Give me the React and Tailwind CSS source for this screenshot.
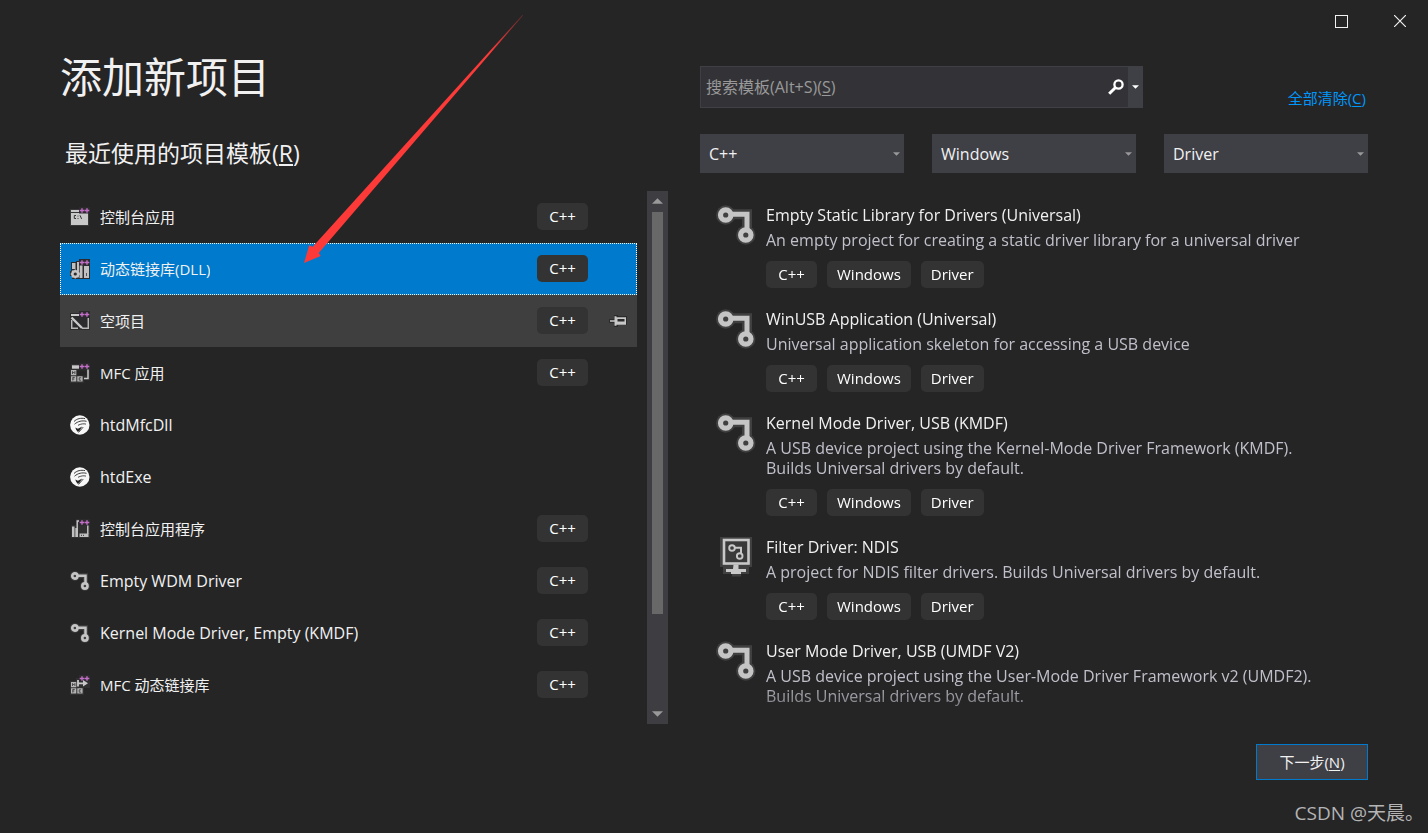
import React from "react";

function PlusPlus() {
  return (
    <>
      <rect x="9" y="0" width="11" height="6.5" fill="#2d2a2e" />
      <path d="M12 1.2v4.6M9.7 3.5h4.6M17 1.2v4.6M14.7 3.5h4.6" stroke="#c36fc9" strokeWidth="1.4" fill="none" />
    </>
  );
}

function Icon20({ children }) {
  return (
    <svg viewBox="0 0 20 20" className="size-5 shrink-0" aria-hidden="true">
      {children}
    </svg>
  );
}

function ConsoleIcon() {
  return (
    <Icon20>
      <path d="M0 2h10v3h9v14H0z" fill="#383838" />
      <path d="M1 3h8v2H1zM1 6h17v12H1z" fill="#c8c8c8" />
      <path d="M6 8.5H4.3v3H6M8 8.6v.9M8 11v.9M10 8.3l1.6 3.6" stroke="#333" strokeWidth="1" fill="none" />
      <PlusPlus />
    </Icon20>
  );
}

function DllIcon() {
  return (
    <Icon20>
      <path d="M1 3h5V2h8v2h6v16H2v-3H0v-5h1z" fill="#2d2d30" />
      <path d="M2 4h3.5v6H2zM7 3h5.5v16H9.5v-7H7zM14 7h5v12h-5z" fill="#c0c0c0" />
      <path d="M9.5 6v7M16.5 14v3" stroke="#55555a" strokeWidth="1" />
      <circle cx="5.3" cy="15" r="3" fill="none" stroke="#c8c8c8" strokeWidth="2.2" />
      <path d="M5.3 10.4v9.2M.7 15h9.2M2 11.7l6.6 6.6M8.6 11.7L2 18.3" stroke="#c8c8c8" strokeWidth="1.3" />
      <circle cx="5.3" cy="15" r="1.6" fill="#2d2d30" />
      <PlusPlus />
    </Icon20>
  );
}

function EmptyIcon() {
  return (
    <Icon20>
      <path d="M0 2h10v3h10v14H0z" fill="#2b2b2e" />
      <path d="M1 3h8v2H1z" fill="#c8c8c8" />
      <path d="M1.7 9v8.3H8M12 17.3h6.3V7" fill="none" stroke="#b8b8b8" strokeWidth="1.5" />
      <path d="M1.5 6.5L12 17" stroke="#c8c8c8" strokeWidth="2.4" />
      <PlusPlus />
    </Icon20>
  );
}

function LetterTiles() {
  return (
    <>
      <path d="M1 7h5.3v5.3H1zM1 13.3h5.3v5.3H1zM7.3 13.3h5.3v5.3H7.3z" fill="#b4b4b4" />
      <path d="M2.5 11V8.5l1.2 1.3 1.2-1.3V11M2.8 17.6v-3.2h2M2.8 16h1.6M11.2 14.8H9.2v2.4h2" stroke="#333" strokeWidth=".8" fill="none" />
    </>
  );
}

function MfcIcon() {
  return (
    <Icon20>
      <path d="M1 1h9v5h10v11h-6v3H0V6h1z" fill="#303030" />
      <path d="M2 2.3h7v3.4H2z" fill="#c8c8c8" />
      <path d="M18 6v9.6h-4" stroke="#c8c8c8" strokeWidth="1.5" fill="none" />
      <path d="M7 7.5h9.5v5H7z" fill="#252526" />
      <LetterTiles />
      <PlusPlus />
    </Icon20>
  );
}

function MfcDllIcon() {
  return (
    <Icon20>
      <path d="M6 3h14v10h-6v7H0V6h6z" fill="#303030" />
      <LetterTiles />
      <PlusPlus />
      <path d="M8 5v6.5M8 8.3h6" stroke="#c8c8c8" strokeWidth="1.8" fill="none" />
      <path d="M13 5l5 3.3-5 3.3z" fill="#c8c8c8" />
    </Icon20>
  );
}

function GlobeIcon() {
  return (
    <Icon20>
      <circle cx="9.8" cy="10" r="9.7" fill="#f7f7f7" />
      <path d="M4 6.5C7 3.500 11 2.800 15 3.600M4.500 9.200C8 6.200 12 5.300 16.500 6.300" stroke="#252526" strokeWidth=".9" fill="none" />
      <path d="M8 10.3c3-1.500 5.500-1.800 8-1.200M8.500 17.500l4.800-5.500" stroke="#252526" strokeWidth=".8" fill="none" />
      <path d="M5.3 12.5l2.600 1.300 4.300-2.200-2.500 4-1.800 1.500-1.800-2.300z" fill="#252526" />
    </Icon20>
  );
}

function ServerIcon() {
  return (
    <Icon20>
      <path d="M6 0h14v19H1V6h5z" fill="#303030" />
      <path d="M7.2 9V2h2.5M17.8 6v9" stroke="#c8c8c8" strokeWidth="1.4" fill="none" />
      <path d="M2 7.5h2.5V18H2zM5.3 9H8v9H5.3zM9.5 14.5h9V18h-9z" fill="#c0c0c0" />
      <path d="M11 16.3h1M13 16.3h1" stroke="#333" />
      <PlusPlus />
    </Icon20>
  );
}

function DriverIcon({ large }) {
  return (
    <svg viewBox="0 0 40 40" className={large ? "size-10 shrink-0" : "size-5 shrink-0"} aria-hidden="true">
      <path d="M10 9.3h21V28" fill="none" stroke="#404040" strokeWidth="10" />
      <circle cx="9.7" cy="10" r="9.7" fill="#404040" />
      <circle cx="29.8" cy="30" r="9.7" fill="#404040" />
      <path d="M12 9.3h19V28" fill="none" stroke="#c5c5c5" strokeWidth="5" />
      <circle cx="9.7" cy="10" r="5.2" fill="#404040" stroke="#c5c5c5" strokeWidth="5.2" />
      <circle cx="29.8" cy="30" r="5.2" fill="#404040" stroke="#c5c5c5" strokeWidth="5.2" />
    </svg>
  );
}

function MonitorIcon() {
  return (
    <svg viewBox="0 0 40 40" className="size-10 shrink-0" aria-hidden="true">
      <path d="M4 0h32v30h-3v7h-8v2.5H16V37H7v-7H4z" fill="#404040" />
      <rect x="8" y="3" width="24.5" height="23.5" fill="#3a3a3a" stroke="#c8c8c8" strokeWidth="2.6" />
      <path d="M17.5 27.5h5v4.5h7.5v3h-5v2h-10v-2h-5V32h7z" fill="#c8c8c8" />
      <path d="M17 10.8h8V18" fill="none" stroke="#c8c8c8" strokeWidth="2" />
      <circle cx="16" cy="11" r="2.8" fill="#3a3a3a" stroke="#c8c8c8" strokeWidth="1.9" />
      <circle cx="23.7" cy="19" r="2.8" fill="#3a3a3a" stroke="#c8c8c8" strokeWidth="1.9" />
    </svg>
  );
}

function Caret({ className }) {
  return (
    <svg viewBox="0 0 8 4" className={className} aria-hidden="true">
      <path d="M0 0h8L4 4z" fill="currentColor" />
    </svg>
  );
}

const recent = [
  { name: "控制台应用", icon: ConsoleIcon, tag: true },
  { name: "动态链接库(DLL)", icon: DllIcon, tag: true, selected: true },
  { name: "空项目", icon: EmptyIcon, tag: true, hovered: true },
  { name: "MFC 应用", icon: MfcIcon, tag: true },
  { name: "htdMfcDll", icon: GlobeIcon, latin: true },
  { name: "htdExe", icon: GlobeIcon, latin: true },
  { name: "控制台应用程序", icon: ServerIcon, tag: true },
  { name: "Empty WDM Driver", icon: DriverIcon, tag: true, latin: true },
  { name: "Kernel Mode Driver, Empty (KMDF)", icon: DriverIcon, tag: true, latin: true },
  { name: "MFC 动态链接库", icon: MfcDllIcon, tag: true },
];

const tags = ["C++", "Windows", "Driver"];

const templates = [
  {
    title: "Empty Static Library for Drivers (Universal)",
    lines: ["An empty project for creating a static driver library for a universal driver"],
    tags,
  },
  {
    title: "WinUSB Application (Universal)",
    lines: ["Universal application skeleton for accessing a USB device"],
    tags,
  },
  {
    title: "Kernel Mode Driver, USB (KMDF)",
    lines: [
      "A USB device project using the Kernel-Mode Driver Framework (KMDF).",
      "Builds Universal drivers by default.",
    ],
    tags,
  },
  {
    title: "Filter Driver: NDIS",
    lines: ["A project for NDIS filter drivers. Builds Universal drivers by default."],
    monitor: true,
    tags,
  },
  {
    title: "User Mode Driver, USB (UMDF V2)",
    lines: [
      "A USB device project using the User-Mode Driver Framework v2 (UMDF2).",
      "Builds Universal drivers by default.",
    ],
    tags: [],
  },
];

function Tag({ children }) {
  return (
    <span className="flex h-[27px] min-w-[51px] items-center justify-center rounded-[5px] bg-[#333334] px-[10px] pb-[2px] text-[15px] leading-5 text-white">
      {children}
    </span>
  );
}

function RecentRow({ item }) {
  const Icon = item.icon;
  const tone = item.selected
    ? "border border-dotted border-white bg-[#007acc] px-[9px]"
    : item.hovered
      ? "bg-[#3f3f40] px-[10px]"
      : "px-[10px]";
  return (
    <li className={`flex h-[52px] items-center ${tone}`}>
      <button type="button" className="flex min-w-0 flex-1 items-center gap-[10px] text-left">
        <Icon />
        <span className={`truncate leading-6 ${item.latin ? "text-[16px]" : "text-[15px]"}`}>{item.name}</span>
      </button>
      <div className="flex w-[51px] justify-center pb-px">{item.tag && <Tag>C++</Tag>}</div>
      <div className="flex w-[39px] justify-end">
        {item.hovered && (
          <button type="button" aria-label="固定">
            <svg viewBox="0 0 18 12" className="h-3 w-[18px]" aria-hidden="true">
              <path d="M0 4h5V0h4v1h9v9H9v2H5V8H0z" fill="#2b2b2b" />
              <path d="M1 5.2h4.5V1.2H7.5v1H17v7.6H7.5v1H5.5V6.8H1z" fill="#c8c8c8" />
              <path d="M8.5 4h7v2.5h-7z" fill="#2b2b2b" />
            </svg>
          </button>
        )}
      </div>
    </li>
  );
}

function Filter({ label, value }) {
  return (
    <label className="relative block">
      <select
        aria-label={label}
        defaultValue={value}
        className="h-[39px] w-full appearance-none bg-[#3f3f46] pr-6 pl-[9px] text-[16px] text-[#f1f1f1] outline-none"
      >
        <option>{value}</option>
      </select>
      <Caret className="pointer-events-none absolute top-[18px] right-1 h-1 w-[7px] text-[#999999]" />
    </label>
  );
}

export default function App() {
  return (
    <div className="relative flex min-h-screen flex-col bg-[#252526] font-['Open_Sans','Noto_Sans_CJK_SC',sans-serif] text-[#f1f1f1]">
      <header className="flex h-[42px] justify-end gap-[3px]">
        <button type="button" aria-label="最大化" className="flex w-14 items-center justify-center">
          <svg viewBox="0 0 13 13" className="size-[13px]" aria-hidden="true">
            <rect x=".5" y=".5" width="12" height="12" fill="none" stroke="#f1f1f1" />
          </svg>
        </button>
        <button type="button" aria-label="关闭" className="flex w-14 items-center justify-center">
          <svg viewBox="0 0 12 12" className="size-3" aria-hidden="true">
            <path d="M0 0l12 12M12 0L0 12" fill="none" stroke="#f1f1f1" strokeWidth="1.2" />
          </svg>
        </button>
      </header>

      <main className="grid grid-cols-[608fr_668fr] gap-8 px-[60px]">
        <section className="min-w-0">
          <h1 className="mt-[7px] text-[42px] leading-[56px]">添加新项目</h1>
          <h2 className="mt-8 pl-[5px] text-[23px] leading-8">
            最近使用的项目模板(<u className="underline-offset-2">R</u>)
          </h2>
          <div className="mt-[22px] flex gap-[10px]">
            <ul className="min-w-0 flex-1">
              {recent.map((item) => (
                <RecentRow key={item.name} item={item} />
              ))}
            </ul>
            <div className="flex h-[533px] w-[21px] flex-col items-center justify-between bg-[#3e3e42] py-[7px]">
              <Caret className="h-[6px] w-[11px] rotate-180 text-[#999999]" />
              <div className="mt-2 mb-auto h-[402px] w-[11px] bg-[#686868]" />
              <Caret className="h-[6px] w-[11px] text-[#999999]" />
            </div>
          </div>
        </section>

        <section className="min-w-0 pt-6">
          <div className="flex items-end justify-between">
            <div className="flex h-[42px] w-[443px] border border-[#3f3f46] bg-[#333337]">
              <div className="relative flex flex-1 items-center">
                <input
                  id="search"
                  type="text"
                  className="peer h-full w-full bg-transparent px-[5px] text-[16px] outline-none"
                  placeholder=" "
                />
                <label
                  htmlFor="search"
                  className="pointer-events-none absolute left-[5px] hidden text-[16px] leading-5 text-[#999999] peer-placeholder-shown:block"
                >
                  搜索模板(Alt+S)(<u className="underline-offset-2">S</u>)
                </label>
              </div>
              <button type="button" aria-label="搜索" className="flex w-6 items-center justify-center">
                <svg viewBox="0 0 16 16" className="size-4" aria-hidden="true">
                  <circle cx="10.5" cy="5.5" r="4.1" fill="none" stroke="#fff" strokeWidth="2.3" />
                  <path d="M7.5 8.5L1.2 14.8" stroke="#fff" strokeWidth="3" />
                </svg>
              </button>
              <button type="button" aria-label="搜索选项" className="flex w-[14px] items-center justify-center bg-[#3f3f46]">
                <Caret className="h-1 w-[7px] text-white" />
              </button>
            </div>
            <a href="#clear" className="pr-[2px] text-[15px] leading-5 text-[#0097fb]">
              全部清除(<u className="underline-offset-2">C</u>)
            </a>
          </div>

          <div className="mt-[26px] grid grid-cols-3 gap-7">
            <Filter label="语言" value="C++" />
            <Filter label="平台" value="Windows" />
            <Filter label="项目类型" value="Driver" />
          </div>

          <ul className="mt-[30px] [mask-image:linear-gradient(to_bottom,black_calc(100%-44px),rgba(0,0,0,0.25))]">
            {templates.map((t) => (
              <li key={t.title} className="flex gap-[10px] pb-[19px] pl-4">
                <div className="pt-[2px]">{t.monitor ? <MonitorIcon /> : <DriverIcon large />}</div>
                <div className="min-w-0 flex-1">
                  <h3 className="text-[16px] leading-6">{t.title}</h3>
                  <p className="mt-[3px] text-[16px] leading-5 text-[#c0c0ca]">
                    {t.lines.map((line) => (
                      <span key={line} className="block">
                        {line}
                      </span>
                    ))}
                  </p>
                  {t.tags.length > 0 && (
                    <div className="mt-[11px] flex gap-[10px]">
                      {t.tags.map((tag) => (
                        <Tag key={tag}>{tag}</Tag>
                      ))}
                    </div>
                  )}
                </div>
              </li>
            ))}
          </ul>
          <div className="mt-[19px] flex justify-end">
            <button type="button" className="h-9 w-28 border border-[#007acc] bg-[#3f3f46] text-[15px] leading-5">
              下一步(<u className="underline-offset-2">N</u>)
            </button>
          </div>
        </section>
      </main>

      <footer className="mt-auto flex justify-end pt-[18px] pr-1 pb-[6px] text-[19px] leading-7 text-[#b4b4b5]">
        CSDN @天晨。
      </footer>

      <svg
        viewBox="0 0 220 250"
        className="pointer-events-none absolute top-[14px] left-[304px] h-[250px] w-[220px]"
        aria-hidden="true"
      >
        <defs>
          <linearGradient id="tail" x1="0" y1="1" x2="1" y2="0">
            <stop offset=".85" stopColor="#fe3a38" />
            <stop offset="1" stopColor="#fe3a38" stopOpacity=".3" />
          </linearGradient>
        </defs>
        <path d="M0 249L5.3 231l3.2 2L218.5 1l.5.4L14.700 239l2 3z" fill="url(#tail)" />
      </svg>
    </div>
  );
}
